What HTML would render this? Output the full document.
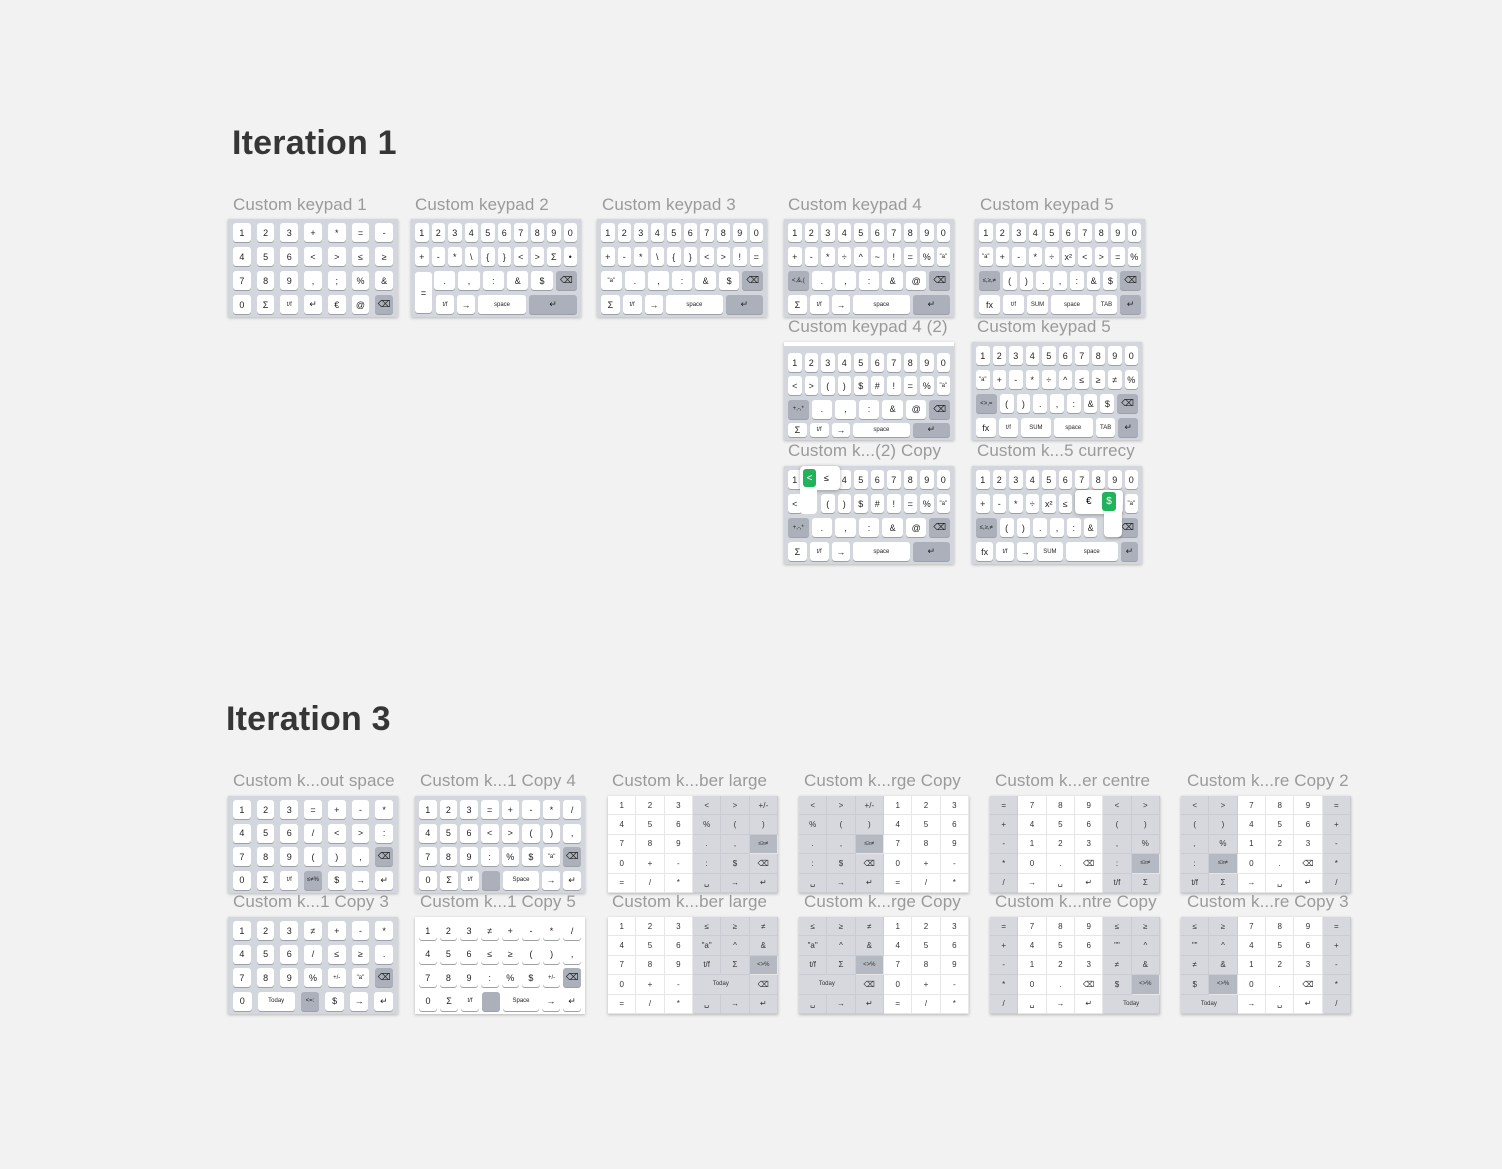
<!DOCTYPE html>
<html><head><meta charset="utf-8">
<style>
*{box-sizing:border-box;margin:0;padding:0}
body{width:1502px;height:1169px;background:#f2f2f2;position:relative;overflow:hidden;font-family:"Liberation Sans","DejaVu Sans",sans-serif}
h1{position:absolute;font-size:34px;font-weight:bold;color:#363636;letter-spacing:0.2px}
.l{position:absolute;font-size:17px;color:#9a9a9a;white-space:nowrap;letter-spacing:0.1px}
.kp{position:absolute;width:170px;height:98px;background:#d3d6dc;padding:4px 4px 3px;display:flex;flex-direction:column;justify-content:space-between;box-shadow:0 1px 3px rgba(0,0,0,.25)}
.r{display:flex;gap:3px;height:19px}
.r b{flex:1;background:#fff;border-radius:3px;font-weight:normal;font-size:9px;color:#222;display:flex;align-items:center;justify-content:center;box-shadow:0 1px 0 #9da0a6;white-space:nowrap;overflow:hidden}
.r b.d{background:#abb0ba}
.r b.s{font-size:6px}
.r b.x{visibility:hidden}
.w2{flex:2!important}.w3{flex:3!important}.w4{flex:4!important}.w15{flex:1.5!important}
.g7 .r{gap:6px}
.fg{position:absolute;width:170px;height:97px;background:#fff;display:grid;grid-template-columns:repeat(6,1fr);grid-template-rows:repeat(5,1fr);box-shadow:0 1px 3px rgba(0,0,0,.25)}
.fg i{font-style:normal;font-size:8px;color:#333;display:flex;align-items:center;justify-content:center;border-right:1px solid #e6e6e6;border-bottom:1px solid #e6e6e6;white-space:nowrap}
.fg i.g{background:#d6d8de;border-color:#c9ccd2}
.fg i.k{background:#b5b9c2;font-size:6px}
.fg i.t{grid-column:span 2;font-size:6px}
.pop{position:absolute;background:#fff;border-radius:4px;box-shadow:0 1px 4px rgba(0,0,0,.3)}
.gr{position:absolute;background:#22b35a;color:#fff;border-radius:3px;font-size:10px;display:flex;align-items:center;justify-content:center}
</style></head><body>

<h1 style="left:232px;top:124px">Iteration 1</h1>
<h1 style="left:226px;top:700px">Iteration 3</h1>

<div class="l" style="left:233px;top:195px">Custom keypad 1</div>
<div class="l" style="left:415px;top:195px">Custom keypad 2</div>
<div class="l" style="left:602px;top:195px">Custom keypad 3</div>
<div class="l" style="left:788px;top:195px">Custom keypad 4</div>
<div class="l" style="left:980px;top:195px">Custom keypad 5</div>
<div class="l" style="left:788px;top:317px">Custom keypad 4 (2)</div>
<div class="l" style="left:977px;top:317px">Custom keypad 5</div>
<div class="l" style="left:788px;top:441px">Custom k...(2) Copy</div>
<div class="l" style="left:977px;top:441px">Custom k...5 currecy</div>

<!-- KP1 -->
<div class="kp g7" style="left:228px;top:219px;padding:4px 5px 3px">
<div class="r"><b>1</b><b>2</b><b>3</b><b>+</b><b>*</b><b>=</b><b>-</b></div>
<div class="r"><b>4</b><b>5</b><b>6</b><b>&lt;</b><b>&gt;</b><b>≤</b><b>≥</b></div>
<div class="r"><b>7</b><b>8</b><b>9</b><b>,</b><b>;</b><b>%</b><b>&amp;</b></div>
<div class="r"><b>0</b><b>Σ</b><b class="s">t/f</b><b>↵</b><b>€</b><b>@</b><b class="d">⌫</b></div>
</div>

<!-- KP2 -->
<div class="kp" style="left:411px;top:219px">
<div class="r"><b>1</b><b>2</b><b>3</b><b>4</b><b>5</b><b>6</b><b>7</b><b>8</b><b>9</b><b>0</b></div>
<div class="r"><b>+</b><b>-</b><b>*</b><b>\</b><b>{</b><b>}</b><b>&lt;</b><b>&gt;</b><b>Σ</b><b>•</b></div>
<div class="r"><b class="x w15"></b><b class="w2">.</b><b class="w2">,</b><b class="w2">:</b><b class="w2">&amp;</b><b class="w2">$</b><b class="d w2">⌫</b></div>
<div class="r"><b class="x w15"></b><b class="s w15">t/f</b><b class="w15">→</b><b class="s w4">space</b><b class="d w4">↵</b></div>
</div>
<div style="position:absolute;left:415px;top:272px;width:17px;height:41px;background:#fff;border-radius:3px;box-shadow:0 1px 0 #9da0a6;font-size:9px;display:flex;align-items:center;justify-content:center">=</div>

<!-- KP3 -->
<div class="kp" style="left:597px;top:219px">
<div class="r"><b>1</b><b>2</b><b>3</b><b>4</b><b>5</b><b>6</b><b>7</b><b>8</b><b>9</b><b>0</b></div>
<div class="r"><b>+</b><b>-</b><b>*</b><b>\</b><b>{</b><b>}</b><b>&lt;</b><b>&gt;</b><b>!</b><b>=</b></div>
<div class="r"><b class="s">"a"</b><b>.</b><b>,</b><b>:</b><b>&amp;</b><b>$</b><b class="d">⌫</b></div>
<div class="r"><b>Σ</b><b class="s">t/f</b><b>→</b><b class="s w3">space</b><b class="d w2">↵</b></div>
</div>

<!-- KP4 -->
<div class="kp" style="left:784px;top:219px">
<div class="r"><b>1</b><b>2</b><b>3</b><b>4</b><b>5</b><b>6</b><b>7</b><b>8</b><b>9</b><b>0</b></div>
<div class="r"><b>+</b><b>-</b><b>*</b><b>÷</b><b>^</b><b>~</b><b>!</b><b>=</b><b>%</b><b class="s">"a"</b></div>
<div class="r"><b class="d s">&lt;,&amp;,(</b><b>.</b><b>,</b><b>:</b><b>&amp;</b><b>@</b><b class="d">⌫</b></div>
<div class="r"><b>Σ</b><b class="s">t/f</b><b>→</b><b class="s w3">space</b><b class="d w2">↵</b></div>
</div>

<!-- KP5 -->
<div class="kp" style="left:975px;top:219px">
<div class="r"><b>1</b><b>2</b><b>3</b><b>4</b><b>5</b><b>6</b><b>7</b><b>8</b><b>9</b><b>0</b></div>
<div class="r"><b class="s">"a"</b><b>+</b><b>-</b><b>*</b><b>÷</b><b>x²</b><b>&lt;</b><b>&gt;</b><b>=</b><b>%</b></div>
<div class="r"><b class="d s w15">≤,≥,≠</b><b>(</b><b>)</b><b>.</b><b>,</b><b>:</b><b>&amp;</b><b>$</b><b class="d w15">⌫</b></div>
<div class="r"><b>fx</b><b class="s">t/f</b><b class="s">SUM</b><b class="s w2">space</b><b class="s">TAB</b><b class="d">↵</b></div>
</div>

<!-- KP4 (2) -->
<div class="kp" style="left:784px;top:342px;padding-top:7px;border-top:4px solid #fff">
<div class="r"><b>1</b><b>2</b><b>3</b><b>4</b><b>5</b><b>6</b><b>7</b><b>8</b><b>9</b><b>0</b></div>
<div class="r"><b>&lt;</b><b>&gt;</b><b>(</b><b>)</b><b>$</b><b>#</b><b>!</b><b>=</b><b>%</b><b class="s">"a"</b></div>
<div class="r"><b class="d s">+,-,*</b><b>.</b><b>,</b><b>:</b><b>&amp;</b><b>@</b><b class="d">⌫</b></div>
<div class="r" style="height:14px"><b>Σ</b><b class="s">t/f</b><b>→</b><b class="s w3">space</b><b class="d w2">↵</b></div>
</div>

<!-- KP5 b -->
<div class="kp" style="left:972px;top:342px">
<div class="r"><b>1</b><b>2</b><b>3</b><b>4</b><b>5</b><b>6</b><b>7</b><b>8</b><b>9</b><b>0</b></div>
<div class="r"><b class="s">"a"</b><b>+</b><b>-</b><b>*</b><b>÷</b><b>^</b><b>≤</b><b>≥</b><b>≠</b><b>%</b></div>
<div class="r"><b class="d s w15">&lt;&gt;,=</b><b>(</b><b>)</b><b>.</b><b>,</b><b>:</b><b>&amp;</b><b>$</b><b class="d w15">⌫</b></div>
<div class="r"><b>fx</b><b class="s">t/f</b><b class="s w15">SUM</b><b class="s w2">space</b><b class="s">TAB</b><b class="d">↵</b></div>
</div>

<!-- Copy -->
<div class="kp" style="left:784px;top:466px">
<div class="r"><b>1</b><b>2</b><b>3</b><b>4</b><b>5</b><b>6</b><b>7</b><b>8</b><b>9</b><b>0</b></div>
<div class="r"><b>&lt;</b><b class="x"></b><b>(</b><b>)</b><b>$</b><b>#</b><b>!</b><b>=</b><b>%</b><b class="s">"a"</b></div>
<div class="r"><b class="d s">+,-,*</b><b>.</b><b>,</b><b>:</b><b>&amp;</b><b>@</b><b class="d">⌫</b></div>
<div class="r"><b>Σ</b><b class="s">t/f</b><b>→</b><b class="s w3">space</b><b class="d w2">↵</b></div>
</div>
<div class="pop" style="left:800px;top:466px;width:40px;height:24px"></div>
<div class="pop" style="left:800px;top:480px;width:17px;height:34px;box-shadow:none"></div>
<div class="gr" style="left:803px;top:469px;width:13px;height:18px">&lt;</div>
<div style="position:absolute;left:824px;top:473px;font-size:9px">≤</div>

<!-- currency -->
<div class="kp" style="left:972px;top:466px">
<div class="r"><b>1</b><b>2</b><b>3</b><b>4</b><b>5</b><b>6</b><b>7</b><b>8</b><b>9</b><b>0</b></div>
<div class="r"><b>+</b><b>-</b><b>*</b><b>÷</b><b>x²</b><b>≤</b><b class="x"></b><b class="x"></b><b class="x"></b><b class="s">"a"</b></div>
<div class="r"><b class="d s w15">≤,≥,≠</b><b>(</b><b>)</b><b>.</b><b>,</b><b>:</b><b>&amp;</b><b class="x"></b><b class="d w15">⌫</b></div>
<div class="r"><b>fx</b><b class="s">t/f</b><b>→</b><b class="s w15">SUM</b><b class="s w3">space</b><b class="d">↵</b></div>
</div>
<div class="pop" style="left:1075px;top:490px;width:48px;height:24px"></div>
<div class="pop" style="left:1104px;top:500px;width:18px;height:37px;box-shadow:0 2px 2px rgba(0,0,0,.2)"></div>
<div style="position:absolute;left:1086px;top:496px;font-size:10px">€</div>
<div class="gr" style="left:1102px;top:492px;width:14px;height:19px">$</div>

<!-- Iteration 3 labels -->
<div class="l" style="left:233px;top:771px">Custom k...out space</div>
<div class="l" style="left:420px;top:771px">Custom k...1 Copy 4</div>
<div class="l" style="left:612px;top:771px">Custom k...ber large</div>
<div class="l" style="left:804px;top:771px">Custom k...rge Copy</div>
<div class="l" style="left:995px;top:771px">Custom k...er centre</div>
<div class="l" style="left:1187px;top:771px">Custom k...re Copy 2</div>
<div class="l" style="left:233px;top:892px">Custom k...1 Copy 3</div>
<div class="l" style="left:420px;top:892px">Custom k...1 Copy 5</div>
<div class="l" style="left:612px;top:892px">Custom k...ber large</div>
<div class="l" style="left:804px;top:892px">Custom k...rge Copy</div>
<div class="l" style="left:995px;top:892px">Custom k...ntre Copy</div>
<div class="l" style="left:1187px;top:892px">Custom k...re Copy 3</div>

<!-- out space -->
<div class="kp g7" style="left:228px;top:796px;height:97px;padding:4px 5px 3px">
<div class="r"><b>1</b><b>2</b><b>3</b><b>=</b><b>+</b><b>-</b><b>*</b></div>
<div class="r"><b>4</b><b>5</b><b>6</b><b>/</b><b>&lt;</b><b>&gt;</b><b>:</b></div>
<div class="r"><b>7</b><b>8</b><b>9</b><b>(</b><b>)</b><b>,</b><b class="d">⌫</b></div>
<div class="r"><b>0</b><b>Σ</b><b class="s">t/f</b><b class="d s">≤≠%</b><b>$</b><b>→</b><b>↵</b></div>
</div>
<!-- Copy 4 -->
<div class="kp" style="left:415px;top:796px;height:97px">
<div class="r"><b>1</b><b>2</b><b>3</b><b>=</b><b>+</b><b>-</b><b>*</b><b>/</b></div>
<div class="r"><b>4</b><b>5</b><b>6</b><b>&lt;</b><b>&gt;</b><b>(</b><b>)</b><b>,</b></div>
<div class="r"><b>7</b><b>8</b><b>9</b><b>:</b><b>%</b><b>$</b><b class="s">"a"</b><b class="d">⌫</b></div>
<div class="r"><b>0</b><b>Σ</b><b class="s">t/f</b><b class="d"></b><b class="s w2">Space</b><b>→</b><b>↵</b></div>
</div>
<!-- Copy 3 -->
<div class="kp g7" style="left:228px;top:917px;height:97px;padding:4px 5px 3px">
<div class="r"><b>1</b><b>2</b><b>3</b><b>≠</b><b>+</b><b>-</b><b>*</b></div>
<div class="r"><b>4</b><b>5</b><b>6</b><b>/</b><b>≤</b><b>≥</b><b>.</b></div>
<div class="r"><b>7</b><b>8</b><b>9</b><b>%</b><b class="s">+/-</b><b class="s">"a"</b><b class="d">⌫</b></div>
<div class="r"><b>0</b><b class="s w2">Today</b><b class="d s">&lt;=:</b><b>$</b><b>→</b><b>↵</b></div>
</div>
<!-- Copy 5 -->
<div class="kp" style="left:415px;top:917px;height:97px;background:#fff">
<div class="r"><b>1</b><b>2</b><b>3</b><b>≠</b><b>+</b><b>-</b><b>*</b><b>/</b></div>
<div class="r"><b>4</b><b>5</b><b>6</b><b>≤</b><b>≥</b><b>(</b><b>)</b><b>,</b></div>
<div class="r"><b>7</b><b>8</b><b>9</b><b>:</b><b>%</b><b>$</b><b class="s">+/-</b><b class="d">⌫</b></div>
<div class="r"><b>0</b><b>Σ</b><b class="s">t/f</b><b class="d"></b><b class="s w2">Space</b><b>→</b><b>↵</b></div>
</div>

<!-- number large -->
<div class="fg" style="left:608px;top:796px">
<i>1</i><i>2</i><i>3</i><i class="g">&lt;</i><i class="g">&gt;</i><i class="g">+/-</i>
<i>4</i><i>5</i><i>6</i><i class="g">%</i><i class="g">(</i><i class="g">)</i>
<i>7</i><i>8</i><i>9</i><i class="g">.</i><i class="g">,</i><i class="k">≤≥≠</i>
<i>0</i><i>+</i><i>-</i><i class="g">:</i><i class="g">$</i><i class="g">⌫</i>
<i>=</i><i>/</i><i>*</i><i class="g">␣</i><i class="g">→</i><i class="g">↵</i>
</div>
<div class="fg" style="left:608px;top:917px">
<i>1</i><i>2</i><i>3</i><i class="g">≤</i><i class="g">≥</i><i class="g">≠</i>
<i>4</i><i>5</i><i>6</i><i class="g">"a"</i><i class="g">^</i><i class="g">&amp;</i>
<i>7</i><i>8</i><i>9</i><i class="g">t/f</i><i class="g">Σ</i><i class="k">&lt;&gt;%</i>
<i>0</i><i>+</i><i>-</i><i class="g t">Today</i><i class="g">⌫</i>
<i>=</i><i>/</i><i>*</i><i class="g">␣</i><i class="g">→</i><i class="g">↵</i>
</div>
<!-- large copy -->
<div class="fg" style="left:799px;top:796px">
<i class="g">&lt;</i><i class="g">&gt;</i><i class="g">+/-</i><i>1</i><i>2</i><i>3</i>
<i class="g">%</i><i class="g">(</i><i class="g">)</i><i>4</i><i>5</i><i>6</i>
<i class="g">.</i><i class="g">,</i><i class="k">≤≥≠</i><i>7</i><i>8</i><i>9</i>
<i class="g">:</i><i class="g">$</i><i class="g">⌫</i><i>0</i><i>+</i><i>-</i>
<i class="g">␣</i><i class="g">→</i><i class="g">↵</i><i>=</i><i>/</i><i>*</i>
</div>
<div class="fg" style="left:799px;top:917px">
<i class="g">≤</i><i class="g">≥</i><i class="g">≠</i><i>1</i><i>2</i><i>3</i>
<i class="g">"a"</i><i class="g">^</i><i class="g">&amp;</i><i>4</i><i>5</i><i>6</i>
<i class="g">t/f</i><i class="g">Σ</i><i class="k">&lt;&gt;%</i><i>7</i><i>8</i><i>9</i>
<i class="g t">Today</i><i class="g">⌫</i><i>0</i><i>+</i><i>-</i>
<i class="g">␣</i><i class="g">→</i><i class="g">↵</i><i>=</i><i>/</i><i>*</i>
</div>
<!-- centre -->
<div class="fg" style="left:990px;top:796px">
<i class="g">=</i><i>7</i><i>8</i><i>9</i><i class="g">&lt;</i><i class="g">&gt;</i>
<i class="g">+</i><i>4</i><i>5</i><i>6</i><i class="g">(</i><i class="g">)</i>
<i class="g">-</i><i>1</i><i>2</i><i>3</i><i class="g">,</i><i class="g">%</i>
<i class="g">*</i><i>0</i><i>.</i><i>⌫</i><i class="g">:</i><i class="k">≤≥≠</i>
<i class="g">/</i><i>→</i><i>␣</i><i>↵</i><i class="g">t/f</i><i class="g">Σ</i>
</div>
<div class="fg" style="left:990px;top:917px">
<i class="g">=</i><i>7</i><i>8</i><i>9</i><i class="g">≤</i><i class="g">≥</i>
<i class="g">+</i><i>4</i><i>5</i><i>6</i><i class="g">""</i><i class="g">^</i>
<i class="g">-</i><i>1</i><i>2</i><i>3</i><i class="g">≠</i><i class="g">&amp;</i>
<i class="g">*</i><i>0</i><i>.</i><i>⌫</i><i class="g">$</i><i class="k">&lt;&gt;%</i>
<i class="g">/</i><i>␣</i><i>→</i><i>↵</i><i class="g t">Today</i>
</div>
<!-- centre copy 2/3 -->
<div class="fg" style="left:1181px;top:796px">
<i class="g">&lt;</i><i class="g">&gt;</i><i>7</i><i>8</i><i>9</i><i class="g">=</i>
<i class="g">(</i><i class="g">)</i><i>4</i><i>5</i><i>6</i><i class="g">+</i>
<i class="g">,</i><i class="g">%</i><i>1</i><i>2</i><i>3</i><i class="g">-</i>
<i class="g">:</i><i class="k">≤≥≠</i><i>0</i><i>.</i><i>⌫</i><i class="g">*</i>
<i class="g">t/f</i><i class="g">Σ</i><i>→</i><i>␣</i><i>↵</i><i class="g">/</i>
</div>
<div class="fg" style="left:1181px;top:917px">
<i class="g">≤</i><i class="g">≥</i><i>7</i><i>8</i><i>9</i><i class="g">=</i>
<i class="g">""</i><i class="g">^</i><i>4</i><i>5</i><i>6</i><i class="g">+</i>
<i class="g">≠</i><i class="g">&amp;</i><i>1</i><i>2</i><i>3</i><i class="g">-</i>
<i class="g">$</i><i class="k">&lt;&gt;%</i><i>0</i><i>.</i><i>⌫</i><i class="g">*</i>
<i class="g t">Today</i><i>→</i><i>␣</i><i>↵</i><i class="g">/</i>
</div>

</body></html>
